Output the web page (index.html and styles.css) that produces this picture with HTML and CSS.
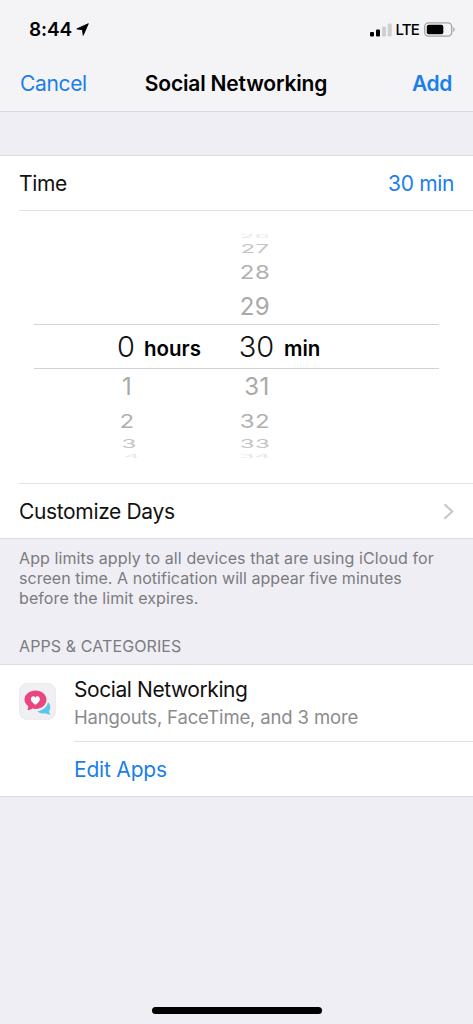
FILE: index.html
```html
<!DOCTYPE html>
<html lang="en">
<head>
<meta charset="utf-8">
<title>Social Networking</title>
<link rel="stylesheet" href="styles.css">
</head>
<body>
<div class="screen">
  <header class="top">
    <div class="status">
      <span class="clock">8:44</span>
      <svg class="loc" width="13" height="13" viewBox="0 0 13 13"><path d="M12.3.7 7.2 12.3 6.5 6.700.8 5.900Z" stroke="#000" stroke-width=".9" stroke-linejoin="round"/></svg>
      <svg class="signal" width="23" height="14" viewBox="0 0 23 14"><rect x="0" y="9" width="4" height="4.5" rx="1"/><rect x="6" y="6.4" width="4" height="7.1" rx="1"/><rect x="12" y="3.5" width="4" height="10" rx="1" fill="#cfcfd2"/><rect x="17.7" y="0.4" width="4" height="13.1" rx="1" fill="#cfcfd2"/></svg>
      <span class="lte">LTE</span>
      <svg class="battery" width="31" height="15" viewBox="0 0 31 15"><rect x=".7" y=".9" width="27" height="13.2" rx="3.8" fill="none" stroke="#a2a2a5" stroke-width="1.3"/><rect x="2.8" y="2.8" width="16.5" height="9.4" rx="2"/><path d="M29.3 5.2c1.9.6 1.9 4 0 4.6Z" fill="#a2a2a5"/></svg>
    </div>
    <nav class="nav">
      <a class="cancel">Cancel</a>
      <h1 class="title">Social Networking</h1>
      <a class="add">Add</a>
    </nav>
  </header>

  <section class="group limits">
    <div class="row time"><span>Time</span><span class="value">30 min</span></div>
    <div class="picker">
      <div class="wheel w4 far"><span></span><b>26</b></div>
      <div class="wheel w3 up3"><span></span><b>27</b></div>
      <div class="wheel w2 up2"><span></span><b>28</b></div>
      <div class="wheel w1 up1"><span></span><b>29</b></div>
      <div class="chosen"><span class="num">0</span><span class="unit">hours</span><span class="num">30</span><span class="unit unit-min">min</span></div>
      <div class="wheel w1 down1"><b>1</b><b class="wide">31</b></div>
      <div class="wheel w2 down2"><b>2</b><b>32</b></div>
      <div class="wheel w3 down3"><b>3</b><b>33</b></div>
      <div class="wheel w4 down4"><b>4</b><b>34</b></div>
    </div>
    <div class="row customize"><span>Customize Days</span>
      <svg width="11" height="17" viewBox="0 0 11 17"><path d="m1.5 1.2 7.7 7.3-7.7 7.3" fill="none" stroke="#c5c5ca" stroke-width="2"/></svg>
    </div>
  </section>

  <p class="note">App limits apply to all devices that are using iCloud for<br><span class="tight">screen time. A notification will appear five minutes</span><br>before the limit expires.</p>
  <h2 class="heading">APPS &amp; CATEGORIES</h2>

  <section class="group apps">
    <svg class="icon" width="37" height="37" viewBox="0 0 37 37">
      <rect x=".4" y=".4" width="36.2" height="36.2" rx="8" fill="#f0f0f3" stroke="#e7e7ea" stroke-width=".8"/>
      <path d="M29 19C32 22 32 26 30 28.200C30.200 29.500 30.800 30.600 31.500 31.700C29.600 31.600 28 31.200 26.500 30.300C23.500 30.900 20.500 30.200 18.200 28.200C23.500 27.800 28 24.500 29 19Z" fill="#5bc5ee"/>
      <path d="M16.500 7.500c6.100 0 11 4.100 11 9.200s-4.900 9.300-11 9.300c-1.100 0-2.200-.1-3.200-.4-1.500 1-3.100 1.500-4.900 1.500.7-1.300.9-2.600.8-4C6.900 21.500 5.500 19.300 5.500 16.700c0-5.100 4.900-9.200 11-9.200Z" fill="#e94680"/>
      <path d="M16.400 21.800c-2.700-2.100-4.500-3.500-4.500-5.600 0-3.200 3.400-3.800 4.500-1.500 1.100-2.300 4.500-1.700 4.500 1.500 0 2.100-1.800 3.500-4.500 5.600Z" fill="#fff"/>
    </svg>
    <div class="list">
      <div class="app"><span class="name">Social Networking</span><span class="sub">Hangouts, FaceTime, and 3 more</span></div>
      <div class="edit"><a>Edit Apps</a></div>
    </div>
  </section>
  <footer class="foot"><i class="home"></i></footer>
</div>
</body>
</html>
```
FILE: styles.css
```css
* { box-sizing: border-box; }
body { margin: 0; background: #efeef4; }
.screen { width: 473px; height: 1024px; display: flex; flex-direction: column; font-family: Inter, "Liberation Sans", sans-serif; font-size: 21px; letter-spacing: -0.35px; color: #111; }
h1, h2, p { margin: 0; font-weight: 400; }
a, .value { color: #1a7fea; }
.top { height: 112px; background: #f4f4f7; border-bottom: 1px solid #d9d9dd; }
.status { height: 56px; padding: 2px 18px 0 29px; display: flex; align-items: center; }
.status svg { fill: #000; }
.clock { font-size: 19px; font-weight: 600; letter-spacing: -0.1px; color: #000; }
.loc { margin: 0 auto 0 4px; }
.signal { margin-top: 1px; }
.lte { font-size: 15px; font-weight: 500; margin: 0 5px 0 2px; letter-spacing: -0.8px; color: #000; }
.nav { height: 55px; padding: 0 21px 0 20px; display: grid; grid-template-columns: 1fr auto 1fr; align-items: center; }
.title { font-size: 21px; font-weight: 600; letter-spacing: -0.18px; color: #000; }
.add { font-weight: 600; text-align: right; }
.group { background: #fff; border-top: 1px solid #dddde1; border-bottom: 1px solid #dddde1; }
.limits { margin-top: 43px; height: 384px; }
.row { display: flex; align-items: center; justify-content: space-between; margin-left: 19px; padding-right: 19px; height: 55px; }
.time { border-bottom: 1px solid #e2e2e5; }
.picker { height: 272px; padding-top: 20px; }
.wheel, .chosen { display: grid; grid-template-columns: 109px 36px 91px 38px 1fr; align-items: center; }
.wheel { overflow: hidden; }
.wheel > :first-child { grid-column: 2; }
.wheel > :nth-child(2) { grid-column: 4; }
.wheel b { font-size: 24px; line-height: 34px; font-weight: 400; letter-spacing: 0.4px; text-align: center; display: block; }
.w1 b { color: #a9a9a9; }
.w2 b { transform: scaleY(.79); color: #b0b0b0; }
.w3 b { transform: scaleY(.5); color: #c4c4c4; margin: -12px 0; }
.w4 b { transform: scaleY(.18); color: #e6e6e6; margin: -12px 0; }
.far { height: 11px; }
.up3 { height: 13px; }
.up2 { height: 35px; }
.up1 { height: 34px; }
.down1 { height: 36px; }
.down2 { height: 31px; }
.down3 { height: 16px; }
.down4 { height: 8px; }
.down3 b:first-child { padding-left: 4px; }
.down4 b:first-child { padding-left: 10px; }
.down1 .wide { padding-left: 4px; }
.chosen { height: 45px; margin: 0 34px; grid-template-columns: 74px 36px 93px 39px 1fr; border-top: 1px solid #d2d2d4; border-bottom: 1px solid #d2d2d4; }
.chosen .num { font-size: 29px; font-weight: 300; letter-spacing: 0; text-align: center; color: #111; }
.chosen .num:first-child { grid-column: 2; }
.unit { font-weight: 600; font-size: 20.500px; letter-spacing: 0; padding-top: 3px; color: #000; }
.unit-min { padding-left: 8px; }
.customize { height: 55px; border-top: 1px solid #e2e2e5; }
.note { padding: 9px 19px 0; height: 97px; font-size: 16px; line-height: 20px; letter-spacing: 0.09px; color: #7b7b80; white-space: nowrap; }
.tight { letter-spacing: 0.04px; }
.heading { padding-left: 19px; height: 28px; font-size: 16px; line-height: 20px; letter-spacing: 0.1px; color: #7b7b80; }
.apps { height: 133px; padding-left: 19px; display: flex; }
.icon { margin-top: 18px; flex: none; }
.list { margin-left: 18px; flex: 1; }
.app { height: 77px; border-bottom: 1px solid #e2e2e5; display: flex; flex-direction: column; padding-top: 11px; }
.name { line-height: 28px; letter-spacing: -0.42px; }
.sub { font-size: 18.500px; line-height: 26px; letter-spacing: -0.15px; color: #8b8b8d; }
.edit { height: 55px; display: flex; align-items: center; letter-spacing: -0.2px; }
.foot { margin-top: auto; height: 17px; display: flex; justify-content: center; }
.home { width: 170px; height: 7px; border-radius: 4px; background: #000; }
```
